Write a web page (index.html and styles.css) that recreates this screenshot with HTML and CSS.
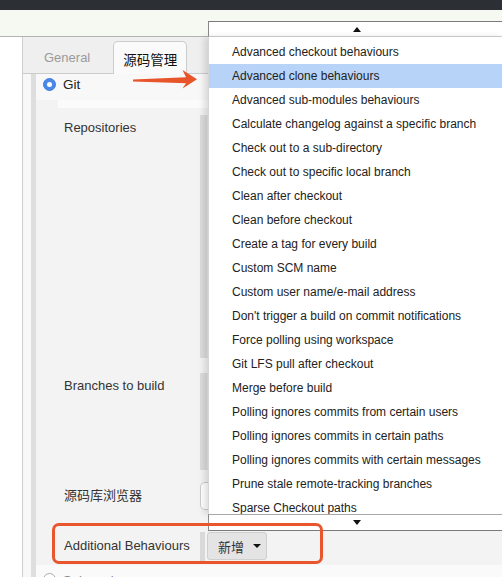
FILE: index.html
```html
<!DOCTYPE html>
<html>
<head>
<meta charset="utf-8">
<link rel="stylesheet" href="styles.css">
</head>
<body>
<div class="topbar"></div>
<div class="subbar"></div>
<div class="page">
  <div class="gutter"></div>
  <div class="panel">
    <div class="tabs">
      <div class="tab">General</div>
      <div class="tab active">源码管理</div>
      <div class="tab">构建触发器</div>
    </div>
    <div class="section">
      <div class="git-row"><span class="radio on"></span><span>Git</span></div>
      <div class="git-cap"></div>
      <div class="row repos">
        <div class="label">Repositories</div>
        <div class="strip"></div>
      </div>
      <div class="row branches">
        <div class="label">Branches to build</div>
        <div class="strip"></div>
      </div>
      <div class="row browser">
        <div class="label cjk">源码库浏览器</div>
        <div class="select"></div>
      </div>
      <div class="row behaviours">
        <div class="label">Additional Behaviours</div>
        <div class="field">
          <div class="btn"><span class="cjk">新增</span><span class="caret"></span></div>
        </div>
      </div>
      <div class="svn-row"><span class="radio"></span><span>Subversion</span></div>
    </div>
  </div>
</div>

<div class="dropdown">
  <div class="scroll up"><span class="tri-up"></span></div>
  <div class="list">
    <div class="item">Advanced checkout behaviours</div>
    <div class="item hl">Advanced clone behaviours</div>
    <div class="item">Advanced sub-modules behaviours</div>
    <div class="item">Calculate changelog against a specific branch</div>
    <div class="item">Check out to a sub-directory</div>
    <div class="item">Check out to specific local branch</div>
    <div class="item">Clean after checkout</div>
    <div class="item">Clean before checkout</div>
    <div class="item">Create a tag for every build</div>
    <div class="item">Custom SCM name</div>
    <div class="item">Custom user name/e-mail address</div>
    <div class="item">Don't trigger a build on commit notifications</div>
    <div class="item">Force polling using workspace</div>
    <div class="item">Git LFS pull after checkout</div>
    <div class="item">Merge before build</div>
    <div class="item">Polling ignores commits from certain users</div>
    <div class="item">Polling ignores commits in certain paths</div>
    <div class="item">Polling ignores commits with certain messages</div>
    <div class="item">Prune stale remote-tracking branches</div>
    <div class="item">Sparse Checkout paths</div>
  </div>
  <div class="scroll down"><span class="tri-down"></span></div>
</div>

<svg class="arrow" width="74" height="26" viewBox="130 66 74 26">
  <polygon points="133,79.6 186,77.2 182.5,70 197,79.3 182.5,88.5 186,83.3 133,81.6" fill="#e8552a"/>
</svg>
<div class="callout"></div>
</body>
</html>
```

FILE: styles.css
```css
* { box-sizing: border-box; }
html, body { margin: 0; padding: 0; }
body {
  width: 502px;
  height: 577px;
  overflow: hidden;
  position: relative;
  background: #fff;
  font-family: "Liberation Sans", Arial, "Noto Sans CJK SC", sans-serif;
  font-size: 13px;
  color: #333;
}
.cjk { font-family: "Liberation Sans", "Noto Sans CJK SC", sans-serif; }

.topbar { height: 10px; background: #2c2f33; }
.subbar { height: 27px; background: #f6f8f2; border-bottom: 1px solid #b3b3b3; }

.page { display: flex; height: 540px; }
.gutter { width: 22px; flex: none; background: #fff; }
.panel {
  flex: 1;
  border-left: 1px solid #cfcfcf;
  background: #f8f8f8;
  display: flex;
  flex-direction: column;
}

.tabs {
  height: 37px;
  flex: none;
  background: #efefef;
  border-bottom: 1px solid #cccccc;
  display: flex;
  align-items: flex-end;
  padding-left: 11px;
  gap: 13px;
}
.tab {
  height: 33px;
  display: flex;
  align-items: center;
  padding: 1px 10px 0;
  color: #9a9a9a;
  font-family: "Liberation Sans", "Noto Sans CJK SC", sans-serif;
  white-space: nowrap;
}
.tab.active {
  background: #fafafa;
  border: 1px solid #cccccc;
  border-bottom: none;
  border-radius: 5px 5px 0 0;
  color: #111;
  font-size: 13.5px;
  margin-bottom: -1px;
  height: 33px;
  padding: 1px 9px 0;
}

.section {
  flex: 1;
  margin-left: 8px;
  border-left: 5px solid #dedede;
  background: #f3f3f3;
  display: flex;
  flex-direction: column;
}
.git-row {
  height: 26px;
  flex: none;
  background: #f8f8f8;
  display: flex;
  align-items: center;
  padding-left: 7px;
  padding-bottom: 5px;
  color: #222;
  font-size: 13.5px;
}
.git-cap { height: 8px; flex: none; margin-left: 22px; background: #fbfbfb; }

.radio {
  width: 13px; height: 13px;
  border-radius: 50%;
  border: 1px solid #aaa;
  background: #fff;
  margin-right: 7px;
  flex: none;
  position: relative;
}
.radio.on { background: #4a88ea; border-color: #3f7ddd; }
.radio.on::after {
  content: "";
  position: absolute;
  width: 5px; height: 5px;
  border-radius: 50%;
  background: #fff;
  left: 3px; top: 3px;
}

.row {
  display: grid;
  grid-template-columns: 136px 1fr;
  padding-left: 28px;
  align-items: start;
  flex: none;
}
.label { line-height: 15px; color: #333; white-space: nowrap; }
.strip {
  width: 8px;
  background: #dcdcdc;
  border-right: 1px solid #e8e8e8;
}
.repos { padding-top: 7px; padding-bottom: 7px; }
.repos .label { margin-top: 5px; }
.repos .strip { height: 243px; }
.branches { padding-top: 8px; padding-bottom: 5px; }
.branches .label { margin-top: 5px; }
.branches .strip { height: 97px; }
.browser { padding-top: 7px; padding-bottom: 15px; }
.browser .label { margin-top: 6px; }
.select {
  height: 28px;
  width: 160px;
  background: #fff;
  border: 1px solid #cccccc;
  border-radius: 5px;
}
.behaviours { padding-top: 7px; padding-bottom: 2px; }
.behaviours .label { margin-top: 6px; }
.field {
  border-left: 5px solid #d9d9d9;
  height: 31px;
  padding-left: 2px;
}
.btn {
  width: 60px;
  height: 28px;
  background: #e4e4e4;
  border: 1px solid #cfcfcf;
  border-radius: 3px;
  display: flex;
  align-items: center;
  padding-left: 10px;
  color: #333;
}
.caret {
  margin-left: 9px;
  width: 0; height: 0;
  border-left: 4px solid transparent;
  border-right: 4px solid transparent;
  border-top: 4px solid #111;
}
.svn-row {
  flex: 1;
  background: #fafafa;
  display: flex;
  align-items: flex-start;
  padding-top: 8px;
  padding-left: 7px;
  color: #888;
}

.dropdown {
  position: absolute;
  left: 208px;
  top: 21px;
  width: 296px;
  display: flex;
  flex-direction: column;
}
.scroll {
  height: 16px;
  background: #fff;
  display: flex;
  align-items: center;
  justify-content: center;
  border-left: 1px solid #8a8a8a;
}
.scroll.up { border-top: 1px solid #7a7a7a; border-bottom: 1px solid #d0d0d0; }
.scroll.down { border-top: 1px solid #a8a8a8; border-bottom: 1px solid #7a7a7a; height: 17px; }
.tri-up {
  width: 0; height: 0;
  border-left: 4px solid transparent;
  border-right: 4px solid transparent;
  border-bottom: 5px solid #111;
}
.tri-down {
  width: 0; height: 0;
  border-left: 4px solid transparent;
  border-right: 4px solid transparent;
  border-top: 5px solid #111;
}
.list {
  height: 477px;
  overflow: hidden;
  background: #fff;
  padding-top: 3px;
  border-left: 1px solid #d6d6d6;
  box-shadow: -4px 0 6px rgba(0,0,0,0.12);
}
.item {
  height: 24px;
  line-height: 24px;
  padding-left: 23px;
  color: #222;
  font-size: 12px;
  white-space: nowrap;
}
.item.hl { background: #b7d4f8; }

.arrow { position: absolute; left: 130px; top: 66px; }
.callout {
  position: absolute;
  left: 52px;
  top: 523px;
  width: 271px;
  height: 41px;
  border: 3px solid #e9552c;
  border-radius: 7px;
}
```
